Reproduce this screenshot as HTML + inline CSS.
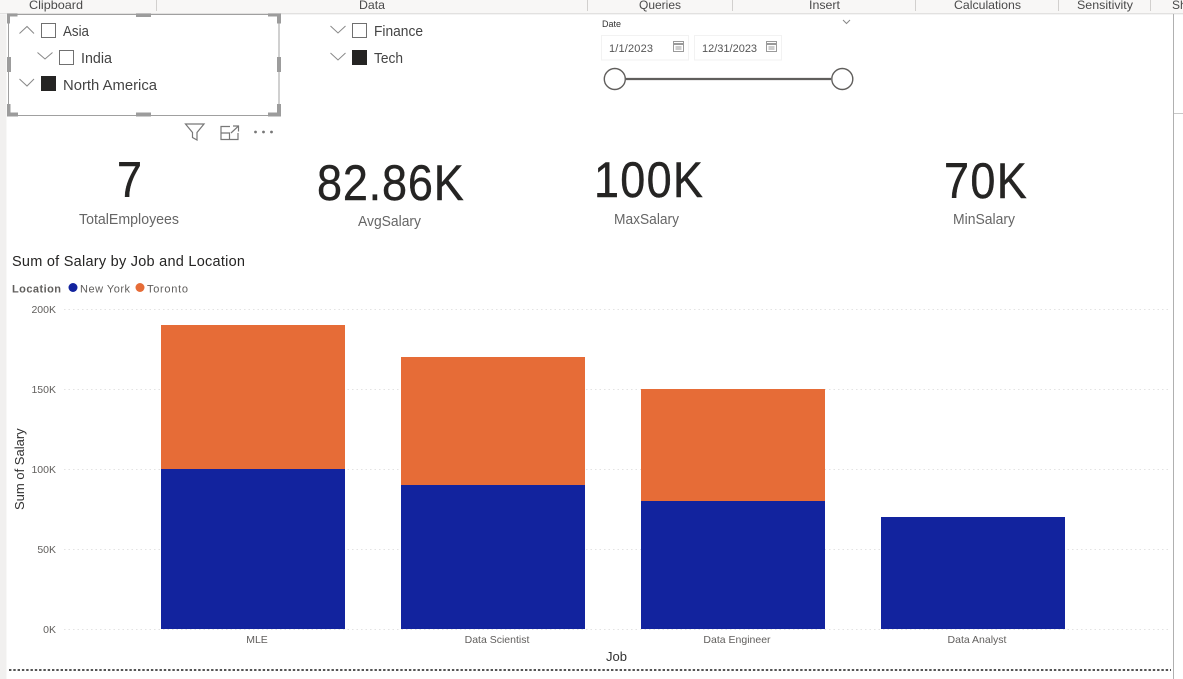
<!DOCTYPE html>
<html><head><meta charset="utf-8"><style>
html,body{margin:0;padding:0;background:#fff;width:1183px;height:679px;overflow:hidden}
svg{display:block}
text{font-family:"Liberation Sans",sans-serif}
</style></head><body>
<svg width="1183" height="679" viewBox="0 0 1183 679" xmlns="http://www.w3.org/2000/svg">
<rect width="1183" height="679" fill="#fff"/>
<!-- left rail -->
<rect x="0" y="13" width="6.500" height="666" fill="#f1f0ef"/>
<!-- ribbon -->
<rect width="1183" height="13" fill="#f8f7f6"/>
<rect y="13" width="1183" height="1" fill="#e2e1e0"/>
<rect y="14" width="1183" height="1" fill="#f4f4f4"/>
<g stroke="#d2d0ce" stroke-width="1"><path d="M156.500 0V11M587.500 0V11M732.500 0V11M915.500 0V11M1058.500 0V11M1150.500 0V11"/></g>
<g font-size="12" fill="#4a4a4a">
<text x="29" y="9" textLength="54" lengthAdjust="spacingAndGlyphs">Clipboard</text>
<text x="359" y="9" textLength="26" lengthAdjust="spacingAndGlyphs">Data</text>
<text x="639" y="9" textLength="42" lengthAdjust="spacingAndGlyphs">Queries</text>
<text x="809" y="9" textLength="31" lengthAdjust="spacingAndGlyphs">Insert</text>
<text x="954" y="9" textLength="67" lengthAdjust="spacingAndGlyphs">Calculations</text>
<text x="1077" y="9" textLength="56" lengthAdjust="spacingAndGlyphs">Sensitivity</text>
<text x="1172" y="9">Sh</text>
</g>
<path d="M1173.500 14V679" stroke="#b0b0b0"/><path d="M1174 113.500H1183" stroke="#c8c8c8"/>

<!-- slicer selection frame -->
<rect x="8.500" y="14.500" width="270.500" height="101" fill="#fff" stroke="#a0a0a0"/>
<g fill="#9c9c9c">
<path d="M7 13.500h10.500v3h-7.500v7H7z"/><path d="M281 13.500h-13v3h9v7h4z"/>
<path d="M7 116.500h11v-4h-7.500v-8.500H7z"/><path d="M281 116.500h-13v-4h9v-8.500h4z"/>
<rect x="136" y="13.500" width="15" height="3.500"/><rect x="136" y="112.500" width="15" height="4"/>
<rect x="7" y="57" width="4" height="15"/><rect x="277" y="57" width="4" height="15"/>
</g>
<!-- slicer 1 -->
<g fill="none" stroke="#888" stroke-width="1">
<path d="M19.500 33.500L27 26.500L34 33.500"/><path d="M37.500 52.500L45 59L52.500 52.500"/><path d="M19.500 79L27 86L34 79"/>
<path d="M330.500 26L338 33L345.500 26"/><path d="M330.500 53L338 60L345.500 53"/>
</g>
<g fill="none" stroke="#707070" stroke-width="1">
<rect x="41.500" y="23.500" width="14" height="14"/>
<rect x="59.500" y="50.500" width="14" height="14"/>
<rect x="352.500" y="23.500" width="14" height="14"/>
</g>
<rect x="41" y="76" width="15" height="15" fill="#252423"/>
<rect x="352" y="50" width="15" height="15" fill="#252423"/>
<g font-size="14.500" fill="#444">
<text x="63" y="36" textLength="26" lengthAdjust="spacingAndGlyphs">Asia</text>
<text x="81" y="63" textLength="31" lengthAdjust="spacingAndGlyphs">India</text>
<text x="63" y="90" textLength="94" lengthAdjust="spacingAndGlyphs">North America</text>
<text x="374" y="36" textLength="49" lengthAdjust="spacingAndGlyphs">Finance</text>
<text x="374" y="63" textLength="29" lengthAdjust="spacingAndGlyphs">Tech</text>
</g>
<!-- visual header icons -->
<g fill="none" stroke="#777" stroke-width="1.200">
<path d="M185.500 124H204L197 132.500V140L192.500 137.500V132.500Z"/>
<path d="M230 126.500H221V139.500H238V133"/><path d="M221 133H229.500V139.500"/><path d="M231 133L238 126.500M233 126H238.500V131.500"/>
</g>
<g fill="#777"><circle cx="255.500" cy="132" r="1.400"/><circle cx="263.500" cy="132" r="1.400"/><circle cx="271.500" cy="132" r="1.400"/></g>

<!-- date slicer -->
<text x="602" y="27" font-size="9" fill="#333" textLength="19" lengthAdjust="spacingAndGlyphs">Date</text>
<path d="M843 20L846.500 23.500L850 20" fill="none" stroke="#888"/>
<rect x="601.500" y="35.500" width="87" height="24.500" fill="#fff" stroke="#f2f2f2"/>
<rect x="694.500" y="35.500" width="87" height="24.500" fill="#fff" stroke="#f2f2f2"/>
<text x="609" y="52" font-size="11" fill="#555" textLength="44" lengthAdjust="spacing">1/1/2023</text>
<text x="702" y="52" font-size="11" fill="#555">12/31/2023</text>
<g fill="none" stroke="#9a9a9a">
<rect x="673.500" y="41.500" width="10" height="10"/><path d="M673 43.500H684M673 44.500H684M675.500 47H681.500M675.500 49H681.500"/>
<rect x="766.500" y="41.500" width="10" height="10"/><path d="M766 43.500H777M766 44.500H777M768.500 47H774.500M768.500 49H774.500"/>
</g>
<path d="M626 79H831" stroke="#605e5c" stroke-width="2.200"/>
<circle cx="614.800" cy="79" r="10.500" fill="#fff" stroke="#605e5c" stroke-width="1.400"/>
<circle cx="842.300" cy="79" r="10.500" fill="#fff" stroke="#605e5c" stroke-width="1.400"/>

<!-- KPI cards -->
<g font-size="50" fill="#252423" stroke="#252423" stroke-width=".4">
<text transform="translate(117,197) scale(.9,1)">7</text>
<text transform="translate(317,200) scale(.9,1)" textLength="163" lengthAdjust="spacing">82.86K</text>
<text transform="translate(594,197) scale(.9,1)" textLength="121" lengthAdjust="spacing">100K</text>
<text transform="translate(944,198) scale(.9,1)" textLength="92" lengthAdjust="spacing">70K</text>
</g>
<g font-size="14.500" fill="#666">
<text x="79" y="224" textLength="100" lengthAdjust="spacingAndGlyphs">TotalEmployees</text>
<text x="358" y="226" textLength="63" lengthAdjust="spacingAndGlyphs">AvgSalary</text>
<text x="614" y="224" textLength="65" lengthAdjust="spacingAndGlyphs">MaxSalary</text>
<text x="953" y="224" textLength="62" lengthAdjust="spacingAndGlyphs">MinSalary</text>
</g>

<!-- chart -->
<text x="12" y="266" font-size="14.500" fill="#252423" textLength="233" lengthAdjust="spacing">Sum of Salary by Job and Location</text>
<text x="12" y="292.500" font-size="11" font-weight="bold" fill="#605e5c" textLength="49" lengthAdjust="spacing">Location</text>
<circle cx="73" cy="287.500" r="4.500" fill="#12239e"/>
<text x="80" y="292.500" font-size="11" fill="#605e5c" textLength="50" lengthAdjust="spacing">New York</text>
<circle cx="140" cy="287.500" r="4.500" fill="#e66c37"/>
<text x="147" y="292.500" font-size="11" fill="#605e5c" textLength="41" lengthAdjust="spacing">Toronto</text>
<g stroke="#e3e3e3" stroke-dasharray="1.500 3" stroke-width="1">
<path d="M64 309.500H1168M64 389.500H1168M64 469.500H1168M64 549.500H1168M64 629.500H1168"/>
</g>
<g font-size="10.500" fill="#605e5c" text-anchor="end">
<text x="56" y="313">200K</text><text x="56" y="393">150K</text><text x="56" y="473">100K</text><text x="56" y="553">50K</text><text x="56" y="633">0K</text>
</g>
<rect x="161" y="325" width="184" height="144" fill="#e66c37"/>
<rect x="161" y="469" width="184" height="160" fill="#12239e"/>
<rect x="401" y="357" width="184" height="128" fill="#e66c37"/>
<rect x="401" y="485" width="184" height="144" fill="#12239e"/>
<rect x="641" y="389" width="184" height="112" fill="#e66c37"/>
<rect x="641" y="501" width="184" height="128" fill="#12239e"/>
<rect x="881" y="517" width="184" height="112" fill="#12239e"/>
<g font-size="10.500" fill="#605e5c" text-anchor="middle">
<text x="257" y="643">MLE</text><text x="497" y="643">Data Scientist</text><text x="737" y="643">Data Engineer</text><text x="977" y="643">Data Analyst</text>
</g>
<text x="606" y="661" font-size="13" fill="#333">Job</text>
<text transform="translate(24,510) rotate(-90)" font-size="13" fill="#333">Sum of Salary</text>
<!-- page bottom dotted -->
<path d="M9 670H1171" stroke="#555" stroke-width="2" stroke-dasharray="2.400 1.900"/>
</svg>
</body></html>
